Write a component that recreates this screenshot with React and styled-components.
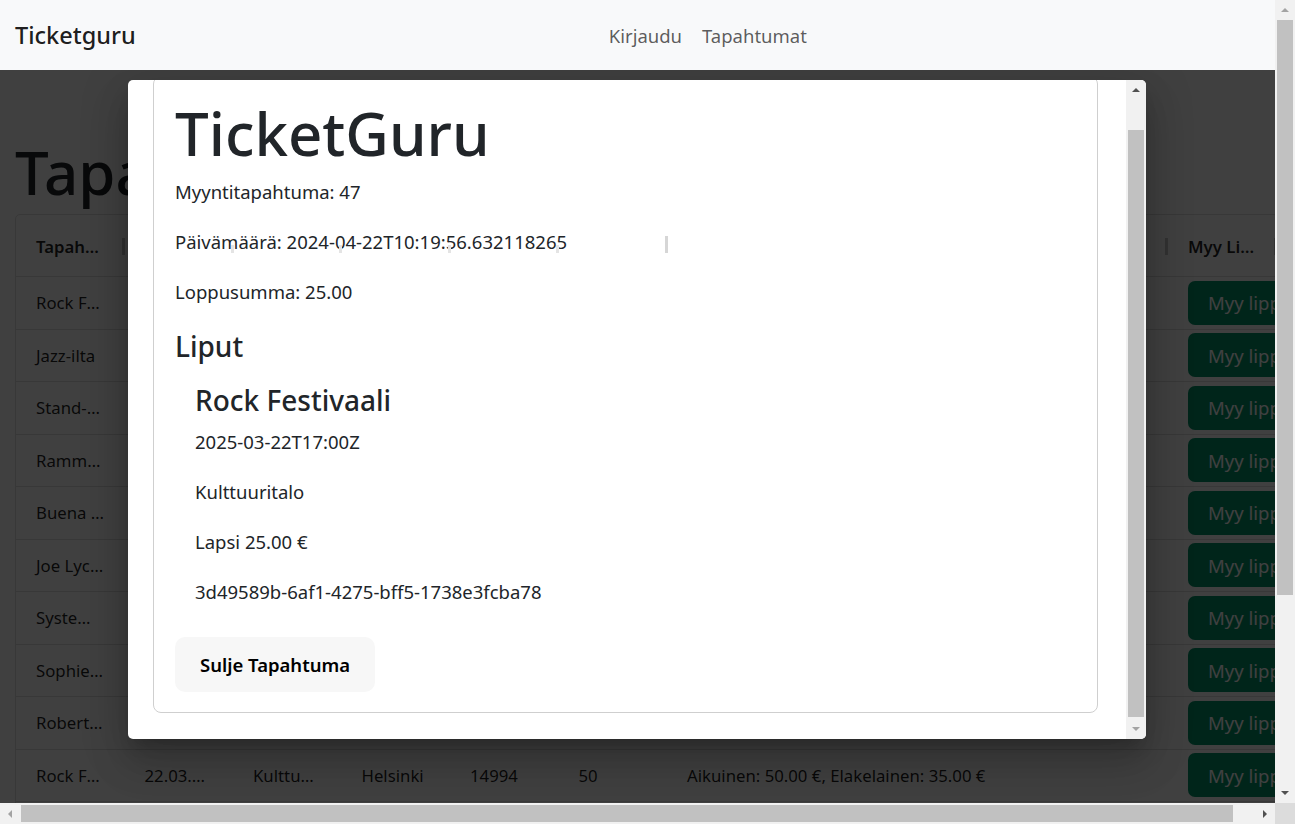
import React, { useLayoutEffect, useRef } from 'react'
import styled, { createGlobalStyle } from 'styled-components'

const GlobalStyle = createGlobalStyle`
  html, body {
    margin: 0;
    padding: 0;
    overflow: hidden;
  }
  body {
    font-family: "Noto Sans", "Open Sans", sans-serif;
    color: #212529;
    background: #fff;
  }
`

/* ---------- window frame with its scrollbars ---------- */

const Frame = styled.div`
  width: 100vw;
  height: 100vh;
  display: grid;
  grid-template-columns: 1fr 20px;
  grid-template-rows: 1fr 21px;
`

const Viewport = styled.div`
  position: relative;
  overflow: hidden;
`

const ScrollBar = styled.div`
  display: flex;
  flex-direction: ${p => (p.$vertical ? 'column' : 'row')};
  flex-shrink: 0;
  ${p => (p.$vertical ? 'width: 20px;' : 'height: 21px;')}
  background: #f1f1f1;
`

const ScrollButton = styled.div`
  flex: 0 0 20px;
  display: flex;
  align-items: center;
  justify-content: center;
`

const Track = styled.div`
  flex: 1;
  display: flex;
  flex-direction: ${p => (p.$vertical ? 'column' : 'row')};
  padding: ${p => (p.$vertical ? '0 2px' : '2px 0')};
`

const Thumb = styled.div`
  background: #c1c1c1;
  ${p =>
    p.$vertical
      ? `margin-top: ${p.$offset}px; flex: 0 0 ${p.$size}px;`
      : `margin-left: ${p.$offset}px; flex: 0 0 ${p.$size}px;`}
`

const Arrow = styled.span`
  width: 0;
  height: 0;
  border: 4px solid transparent;
  ${p => {
    const c = p.$disabled ? '#a3a3a3' : '#505050'
    if (p.$dir === 'up') return `border-top-width: 0; border-bottom-color: ${c};`
    if (p.$dir === 'down') return `border-bottom-width: 0; border-top-color: ${c};`
    if (p.$dir === 'left') return `border-left-width: 0; border-right-color: ${c};`
    return `border-right-width: 0; border-left-color: ${c};`
  }}
`

const Corner = styled.div`
  background: #dcdcdc;
`

const Scroller = ({ vertical, offset, size, startOff, endOff }) => (
  <ScrollBar $vertical={vertical}>
    <ScrollButton>
      <Arrow $dir={vertical ? 'up' : 'left'} $disabled={startOff} />
    </ScrollButton>
    <Track $vertical={vertical}>
      <Thumb $vertical={vertical} $offset={offset} $size={size} />
    </Track>
    <ScrollButton>
      <Arrow $dir={vertical ? 'down' : 'right'} $disabled={endOff} />
    </ScrollButton>
  </ScrollBar>
)

/* ---------- navbar ---------- */

const Navbar = styled.nav`
  position: relative;
  z-index: 1100;
  height: 70px;
  padding: 0 15px;
  display: flex;
  align-items: center;
  background: #f8f9fa;
`

const Brand = styled.a`
  margin-right: 20px;
  font-size: 23.5px;
  font-weight: 500;
  color: rgba(0, 0, 0, 0.9);
  text-decoration: none;
`

const NavLinks = styled.div`
  flex: 1;
  display: flex;
  justify-content: center;
`

const NavLink = styled.a`
  padding: 0 10px;
  font-size: 18.5px;
  color: rgba(0, 0, 0, 0.65);
  text-decoration: none;
`

/* ---------- page + grid ---------- */

const Page = styled.main`
  padding: 66px 0 90px 15px;
`

const PageTitle = styled.h1`
  margin: 0 0 6px;
  font-size: 60px;
  font-weight: 500;
  line-height: 1.2;
  white-space: nowrap;
`

const Grid = styled.div`
  width: 1262px;
  border: 1px solid #e0e0e0;
  border-radius: 5px;
  font-size: 16.75px;
  color: rgba(0, 0, 0, 0.87);
`

const Row = styled.div`
  display: grid;
  grid-template-columns: repeat(6, 108.5px) 501px 108.5px;
  height: ${p => (p.$header ? '62px' : '52.5px')};
  box-sizing: border-box;
  border-bottom: 1px solid #e0e0e0;
`

const Cell = styled.div`
  position: relative;
  padding: 0 20px;
  line-height: ${p => (p.$header ? '63px' : '51.5px')};
  font-weight: ${p => (p.$header ? 600 : 400)};
  white-space: nowrap;
  overflow: hidden;
  text-overflow: ellipsis;

  &::after {
    content: ${p => (p.$header ? "''" : 'none')};
    position: absolute;
    right: 0;
    top: 23px;
    width: 3px;
    height: 17px;
    background: #c8c8c8;
  }
`

const ActionCell = styled.div`
  display: flex;
  align-items: center;
  padding-left: 20px;
`

const SellButton = styled.button`
  flex-shrink: 0;
  height: 44px;
  padding: 0 20px;
  border: none;
  border-radius: 7px;
  background: #03946a;
  color: #fff;
  font-family: inherit;
  font-size: 18.5px;
  white-space: nowrap;
`

const GridFooter = styled.div`
  height: 64px;
  padding: 0 20px;
  display: flex;
  align-items: center;
  justify-content: flex-end;
  font-size: 16px;
`

/* ---------- dialog ---------- */

const Backdrop = styled.div`
  position: absolute;
  inset: 0;
  z-index: 1000;
  padding-top: 80px;
  box-sizing: border-box;
  display: flex;
  justify-content: center;
  align-items: flex-start;
  background: rgba(0, 0, 0, 0.75);
`

const Dialog = styled.div`
  width: 1018px;
  height: 659px;
  margin-right: 1px;
  display: flex;
  overflow: hidden;
  background: #fff;
  border-radius: 5px;
  box-shadow: 0 11px 15px -7px rgba(0, 0, 0, 0.2), 0 24px 38px 3px rgba(0, 0, 0, 0.14),
    0 9px 46px 8px rgba(0, 0, 0, 0.12);
`

const DialogBody = styled.div`
  flex: 1;
  min-width: 0;
  padding: 26px 28px 26px 25px;
  overflow: hidden;
`

const Card = styled.section`
  padding: 20px 21px;
  border: 1px solid #cfcfcf;
  border-radius: 8px;
`

const Title = styled.h1`
  margin: 0 0 10px;
  font-size: 60px;
  font-weight: 500;
  line-height: 1.2;
`

const Text = styled.p`
  margin: 0 0 20px;
  padding-bottom: 4px;
  font-size: 18.5px;
  line-height: 26px;
`

const Heading = styled.h4`
  margin: 0 0 10px;
  padding-bottom: 2px;
  font-size: 28px;
  font-weight: 500;
  line-height: 34px;
`

const Ticket = styled.div`
  padding: 8px 20px;
`

const CloseButton = styled.button`
  padding: 12.5px 25px;
  border: none;
  border-radius: 10px;
  background: #f7f7f7;
  color: #000;
  font-family: inherit;
  font-size: 18.5px;
  font-weight: 600;
  line-height: 30px;
`

const Bleed = styled.span`
  position: absolute;
  left: ${p => p.$x}px;
  top: ${p => p.$top}px;
  width: 3px;
  height: ${p => p.$h}px;
  background: ${p => p.$color};
`

const columns = ['Tapahtuma', 'Päivämäärä', 'Paikka', 'Kaupunki', 'Lippuja jäljellä', 'Lippuja', 'Hinnat', 'Myy Lippuja']

const events = [
  ['Rock Festivaali', '22.03.2025 17:00', 'Kulttuuritalo', 'Helsinki', '14994', '50', 'Aikuinen: 50.00 €, Elakelainen: 35.00 €'],
  ['Jazz-ilta', '15.04.2025 19:00', 'Savoy-teatteri', 'Helsinki', '280', '300', 'Aikuinen: 35.00 €, Lapsi: 20.00 €'],
  ['Stand-up ilta', '02.05.2025 20:00', 'Tavastia', 'Helsinki', '412', '450', 'Aikuinen: 29.00 €'],
  ['Rammstein', '14.06.2025 18:00', 'Olympiastadion', 'Helsinki', '38210', '40000', 'Aikuinen: 99.00 €'],
  ['Buena Vista Social Club', '20.06.2025 19:00', 'Musiikkitalo', 'Helsinki', '1380', '1700', 'Aikuinen: 75.00 €'],
  ['Joe Lycett', '05.07.2025 19:30', 'Kulttuuritalo', 'Helsinki', '960', '1000', 'Aikuinen: 45.00 €'],
  ['System of a Down', '18.07.2025 18:00', 'Kaisaniemen puisto', 'Helsinki', '24500', '25000', 'Aikuinen: 89.00 €'],
  ['Sophie Ellis-Bextor', '09.08.2025 20:00', 'Tavastia', 'Helsinki', '640', '700', 'Aikuinen: 55.00 €'],
  ['Robert Plant', '30.08.2025 19:00', 'Hartwall Areena', 'Helsinki', '7950', '8000', 'Aikuinen: 79.00 €'],
  ['Rock Festivaali', '22.03.2025 17:00', 'Kulttuuritalo', 'Helsinki', '14994', '50', 'Aikuinen: 50.00 €, Elakelainen: 35.00 €'],
  ['Jazz-ilta', '12.09.2025 19:00', 'Savoy-teatteri', 'Helsinki', '300', '300', 'Aikuinen: 35.00 €'],
  ['Stand-up ilta', '03.10.2025 20:00', 'Tavastia', 'Helsinki', '450', '450', 'Aikuinen: 29.00 €'],
]

const SaleDialog = () => {
  const bodyRef = useRef(null)

  // the dialog is shown scrolled to its end
  useLayoutEffect(() => {
    if (bodyRef.current) bodyRef.current.scrollTop = bodyRef.current.scrollHeight
  }, [])

  return (
    <Backdrop>
      <Dialog>
        <DialogBody ref={bodyRef}>
          <Card>
            <Title>TicketGuru</Title>
            <Text>Myyntitapahtuma: 47</Text>
            <Text>Päivämäärä: 2024-04-22T10:19:56.632118265</Text>
            <Text>Loppusumma: 25.00</Text>
            <Heading>Liput</Heading>
            <Ticket>
              <Heading>Rock Festivaali</Heading>
              <Text>2025-03-22T17:00Z</Text>
              <Text>Kulttuuritalo</Text>
              <Text>Lapsi 25.00 €</Text>
              <Text>3d49589b-6af1-4275-bff5-1738e3fcba78</Text>
            </Ticket>
            <CloseButton>Sulje Tapahtuma</CloseButton>
          </Card>
        </DialogBody>
        <Scroller vertical offset={30} size={587} endOff />
      </Dialog>
      <Bleed $x={231} $top={245} $h={8} $color="#e4e4e4" />
      <Bleed $x={339} $top={245} $h={8} $color="#e4e4e4" />
      <Bleed $x={448} $top={245} $h={8} $color="#e4e4e4" />
      <Bleed $x={556} $top={245} $h={8} $color="#e4e4e4" />
      <Bleed $x={665} $top={236} $h={17} $color="#d6d6d6" />
    </Backdrop>
  )
}

const App = () => {
  return (
    <Frame>
      <GlobalStyle />
      <Viewport>
        <Navbar>
          <Brand href="#">Ticketguru</Brand>
          <NavLinks>
            <NavLink href="#">Kirjaudu</NavLink>
            <NavLink href="#">Tapahtumat</NavLink>
          </NavLinks>
        </Navbar>

        <Page>
          <PageTitle>Tapahtumat</PageTitle>
          <Grid>
            <Row $header>
              {columns.map(c => (
                <Cell $header key={c}>{c}</Cell>
              ))}
            </Row>
            {events.map((ev, i) => (
              <Row key={i}>
                {ev.map((v, j) => (
                  <Cell key={j}>{v}</Cell>
                ))}
                <ActionCell>
                  <SellButton>Myy lippuja</SellButton>
                </ActionCell>
              </Row>
            ))}
            <GridFooter>1–12 / 12</GridFooter>
          </Grid>
        </Page>

        <SaleDialog />
      </Viewport>
      <Scroller vertical offset={0} size={575} startOff />
      <Scroller offset={1} size={1212} startOff />
      <Corner />
    </Frame>
  )
}

export default App
